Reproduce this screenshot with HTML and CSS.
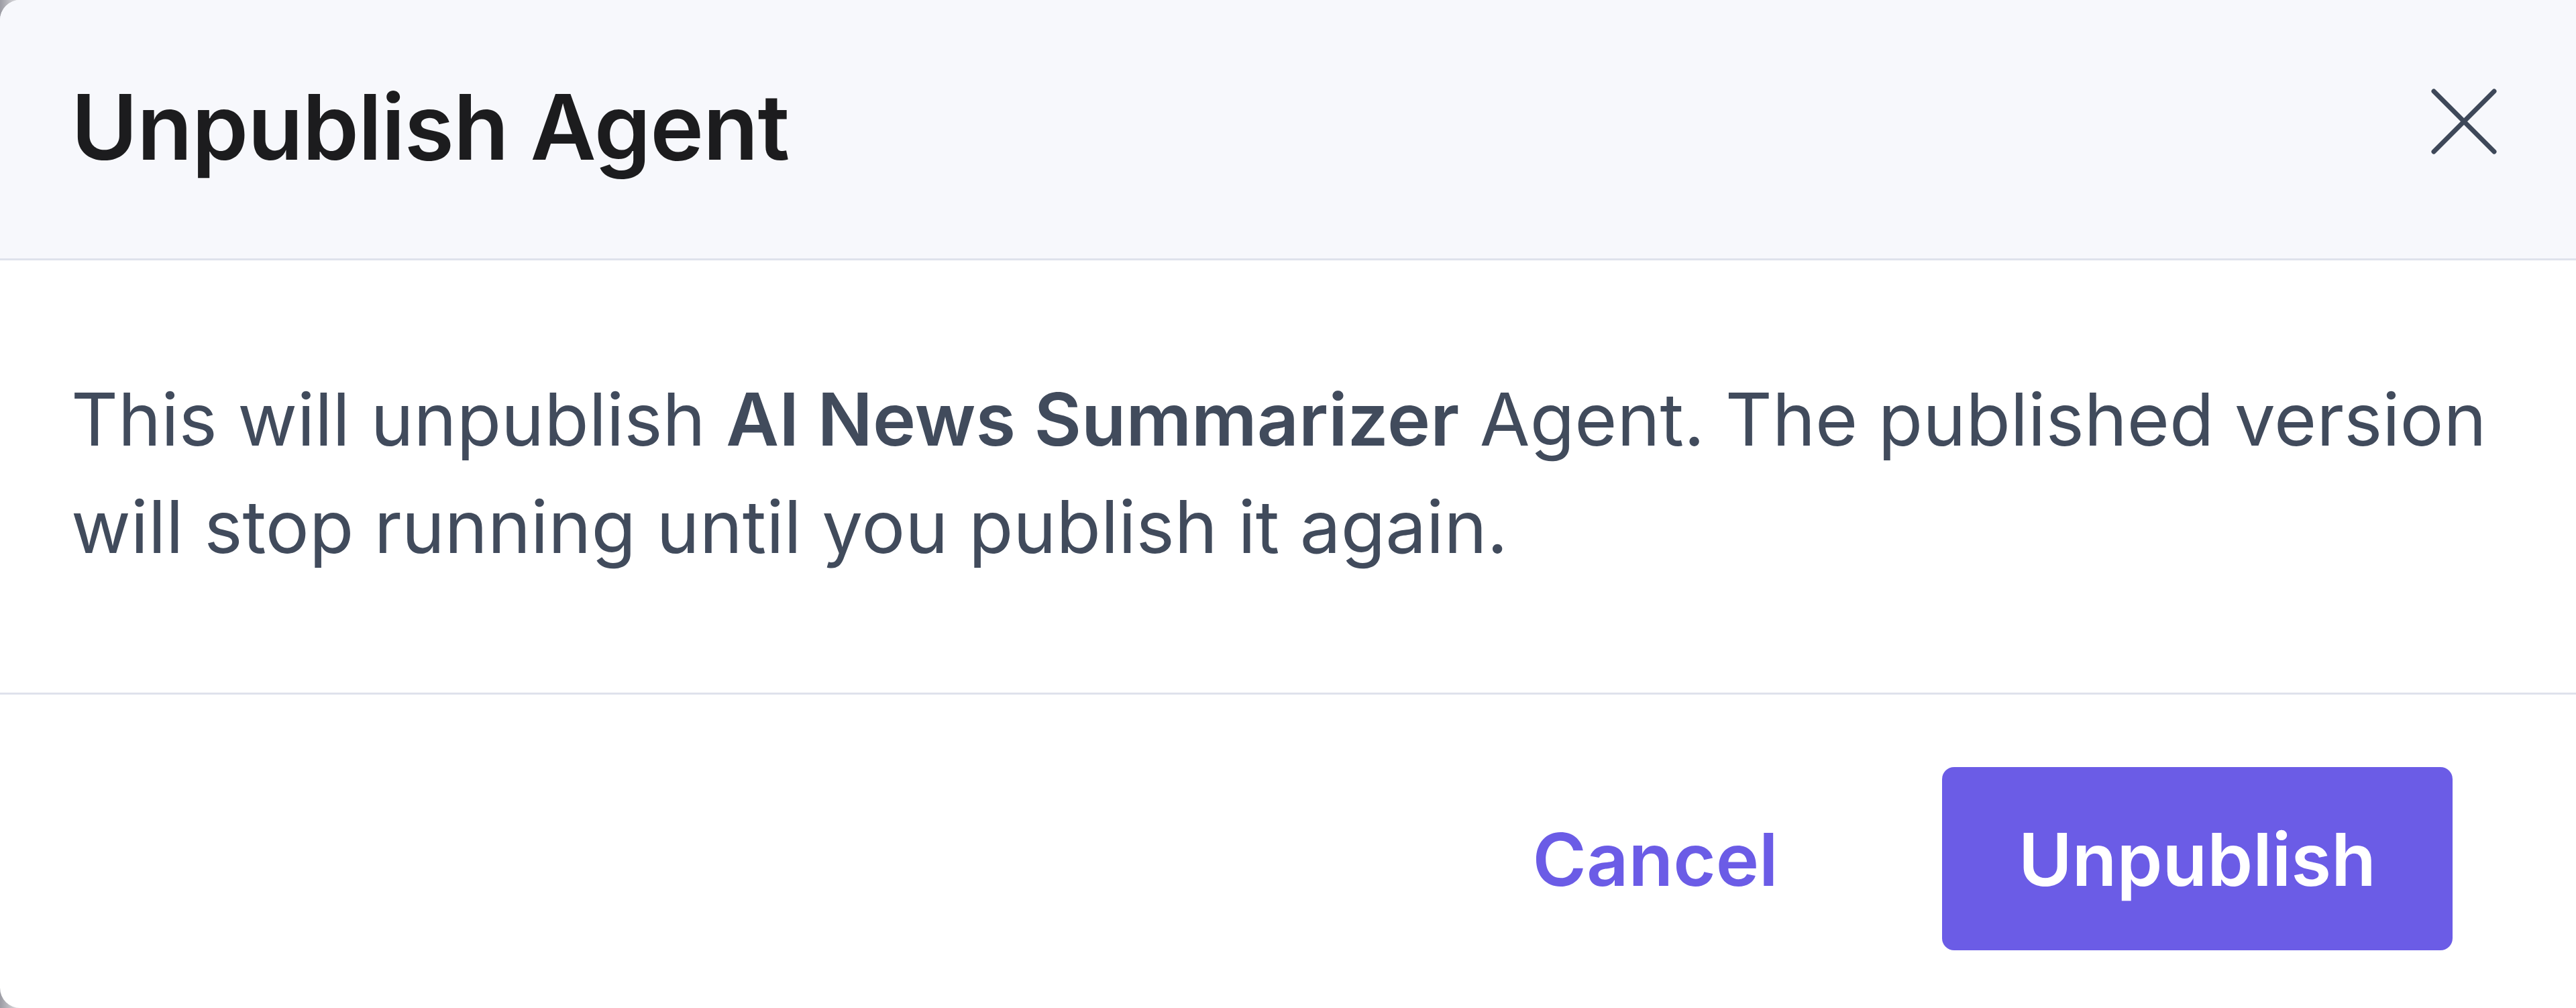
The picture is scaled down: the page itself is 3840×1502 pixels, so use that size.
FILE: index.html
```html
<!DOCTYPE html>
<html lang="en">

<head>
    <meta charset="UTF-8">
    <meta name="viewport" content="width=device-width, initial-scale=1.0">
    <title>Unpublish Agent</title>
    <link rel="stylesheet" href="styles.css">
</head>

<body>
    <div class="modal">
        <!-- Header -->
        <div class="modal-header">
            <h1 class="modal-title">Unpublish Agent</h1>
            <button class="close-btn" aria-label="Close">
                <svg width="98" height="98" viewBox="0 0 98 98" fill="none">
                    <path d="M4 4 L94 94 M94 4 L4 94" stroke="#3e4859" stroke-width="7" stroke-linecap="round"/>
                </svg>
            </button>
        </div>

        <!-- Body -->
        <div class="modal-body">
            <p>This will unpublish <strong>AI News Summarizer</strong> Agent. The published version will stop running until you publish it again.</p>
        </div>

        <!-- Footer -->
        <div class="modal-footer">
            <button class="btn btn-link">Cancel</button>
            <button class="btn btn-primary">Unpublish</button>
        </div>
    </div>
</body>

</html>
```

FILE: styles.css
```css
html, body {
    margin: 0;
    padding: 0;
}

body {
    font-family: Inter, "Noto Sans", Arial, sans-serif;
    background: linear-gradient(to right, #9c9ca4 0, #ffffff 40px);
    height: 1502px;
    overflow: hidden;
}

.modal {
    height: 1502px;
    background-color: #ffffff;
    border-radius: 30px 0 0 30px;
    display: flex;
    flex-direction: column;
    overflow: hidden;
}

.modal-header {
    height: 388px;
    box-sizing: border-box;
    padding: 0 118px 0 106px;
    background-color: #f7f8fc;
    border-bottom: 3px solid #dfe2ec;
    display: flex;
    align-items: center;
    justify-content: space-between;
}

.modal-title {
    margin: -8px 0 0;
    font-size: 135px;
    font-weight: 600;
    color: #1c1c1e;
    letter-spacing: -1px;
}

.close-btn {
    background: none;
    border: none;
    padding: 0;
    margin-top: -24px;
    cursor: pointer;
    display: flex;
}

.modal-body {
    padding: 157px 100px 167px 106px;
}

.modal-body p {
    margin: 0;
    font-size: 108.5px;
    line-height: 160px;
    color: #414b5c;
}

.modal-body strong {
    font-weight: 600;
}

.modal-footer {
    flex: 1;
    border-top: 3px solid #dfe2ec;
    padding: 108px 184px 0 0;
    display: flex;
    justify-content: flex-end;
    align-items: flex-start;
    gap: 130px;
}

.btn {
    height: 273px;
    padding: 0 114px;
    border: none;
    border-radius: 18px;
    font-family: inherit;
    font-size: 109px;
    font-weight: 600;
    cursor: pointer;
    display: inline-flex;
    align-items: center;
}

.btn-link {
    background: none;
    color: #6b5ce6;
}

.btn-primary {
    background-color: #6b5ce6;
    color: #ffffff;
}

.btn-primary:hover {
    background-color: #5d4ed8;
}
```
